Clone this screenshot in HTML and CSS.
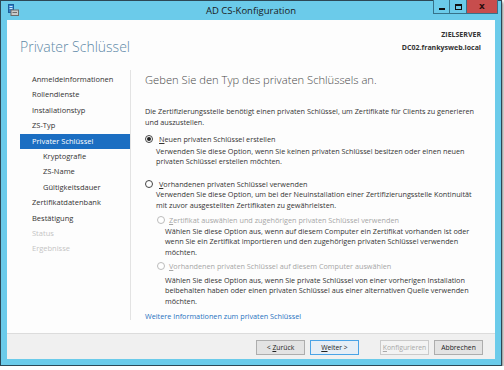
FILE: index.html
```html
<!DOCTYPE html>
<html lang="de">
<head>
    <meta charset="UTF-8">
    <title>AD CS-Konfiguration</title>
    <link rel="stylesheet" href="styles.css">
</head>
<body>
    <div class="window">
        <div class="titlebar">
            <svg class="app-icon" width="11" height="12" viewBox="0 0 11 12">
                <rect x="0.5" y="0.5" width="5" height="8" fill="#2f7fc8" stroke="#1d5f9c"/>
                <rect x="1.5" y="2" width="3" height="1" fill="#cfe6fa"/>
                <rect x="1.5" y="4" width="3" height="1" fill="#cfe6fa"/>
                <rect x="3" y="6" width="7.5" height="5.5" fill="#c9c9c9" stroke="#6b6b6b"/>
                <rect x="4.5" y="8" width="4.5" height="1" fill="#6b6b6b"/>
            </svg>
            <div class="title">AD CS-Konfiguration</div>
            <div class="caption-buttons">
                <span class="cap cap-min"><i></i></span>
                <span class="cap cap-max"><i></i></span>
                <span class="cap cap-close">x</span>
            </div>
        </div>

        <div class="client">
            <div class="header">
                <h1>Privater Schlüssel</h1>
                <div class="target">
                    <div>ZIELSERVER</div>
                    <div>DC02.frankysweb.local</div>
                </div>
            </div>

            <div class="wizard">
                <ul class="steps">
                    <li>Anmeldeinformationen</li>
                    <li>Rollendienste</li>
                    <li>Installationstyp</li>
                    <li>ZS-Typ</li>
                    <li class="active">Privater Schlüssel</li>
                    <li class="sub">Kryptografie</li>
                    <li class="sub">ZS-Name</li>
                    <li class="sub">Gültigkeitsdauer</li>
                    <li>Zertifikatdatenbank</li>
                    <li>Bestätigung</li>
                    <li class="off">Status</li>
                    <li class="off">Ergebnisse</li>
                </ul>

                <div class="page">
                    <h2>Geben Sie den Typ des privaten Schlüssels an.</h2>
                    <p class="intro">Die Zertifizierungsstelle benötigt einen privaten Schlüssel, um Zertifikate für Clients zu generieren<br>und auszustellen.</p>

                    <div class="option option-new">
                        <span class="radio checked"></span>
                        <span><u>N</u>euen privaten Schlüssel erstellen</span>
                    </div>
                    <p class="desc desc-new">Verwenden Sie diese Option, wenn Sie keinen privaten Schlüssel besitzen oder einen neuen<br>privaten Schlüssel erstellen möchten.</p>

                    <div class="option option-existing">
                        <span class="radio"></span>
                        <span><u>V</u>orhandenen privaten Schlüssel verwenden</span>
                    </div>
                    <p class="desc desc-existing">Verwenden Sie diese Option, um bei der Neuinstallation einer Zertifizierungsstelle Kontinuität<br>mit zuvor ausgestellten Zertifikaten zu gewährleisten.</p>

                    <div class="option sub-option sub-cert">
                        <span class="radio disabled"></span>
                        <span><u>Z</u>ertifikat auswählen und zugehörigen privaten Schlüssel verwenden</span>
                    </div>
                    <p class="desc sub-desc desc-cert">Wählen Sie diese Option aus, wenn auf diesem Computer ein Zertifikat vorhanden ist oder<br>wenn Sie ein Zertifikat importieren und den zugehörigen privaten Schlüssel verwenden<br>möchten.</p>

                    <div class="option sub-option sub-key">
                        <span class="radio disabled"></span>
                        <span><u>V</u>orhandenen privaten Schlüssel auf diesem Computer auswählen</span>
                    </div>
                    <p class="desc sub-desc desc-key">Wählen Sie diese Option aus, wenn Sie private Schlüssel von einer vorherigen Installation<br>beibehalten haben oder einen privaten Schlüssel aus einer alternativen Quelle verwenden<br>möchten.</p>

                    <a class="more-link" href="#">Weitere Informationen zum privaten Schlüssel</a>
                </div>
            </div>

            <div class="footer">
                <button class="btn">&lt; <u>Z</u>urück</button>
                <button class="btn btn-default"><u>W</u>eiter &gt;</button>
                <button class="btn btn-disabled" disabled><u>K</u>onfigurieren</button>
                <button class="btn">Abbrechen</button>
            </div>
        </div>
    </div>
</body>
</html>
```

FILE: styles.css
```css
* {
    margin: 0;
    padding: 0;
    box-sizing: border-box;
}

body {
    background: #ffffff;
    font-family: "Open Sans", "Noto Sans", sans-serif;
    color: #333;
}

.window {
    width: 502px;
    height: 366px;
    border: 1px solid #2d4856;
    background: #6bcbea;
    padding: 0 6px 6px;
    display: flex;
    flex-direction: column;
    box-shadow: 1px 2px 3px rgba(0, 0, 0, 0.55);
}

/* title bar */
.titlebar {
    height: 19px;
    display: grid;
    grid-template-columns: 1fr auto 1fr;
    align-items: start;
}

.app-icon {
    margin: 3px 0 0 1px;
}

.title {
    font-size: 9.5px;
    line-height: 19px;
    color: #1a1a1a;
}

.caption-buttons {
    justify-self: end;
    display: flex;
    margin: -1px -3px 0 0;
}

.cap {
    height: 14px;
    border: 1px solid #36728a;
    border-top: none;
    display: flex;
    align-items: center;
    justify-content: center;
}

.cap-min,
.cap-max {
    width: 17px;
    background: #6bcbea;
}

.cap-max {
    border-left: none;
}

.cap-min i {
    width: 6px;
    height: 2px;
    margin-top: 4px;
    background: #111;
}

.cap-max i {
    width: 7px;
    height: 6px;
    border: 1px solid #111;
    border-top-width: 2px;
}

.cap-close {
    width: 31px;
    border-left: none;
    background: #c74d4d;
    color: #2a0d0d;
    font-family: "DejaVu Sans", sans-serif;
    font-weight: bold;
    font-size: 9px;
    line-height: 1;
}

/* client area */
.client {
    flex: 1;
    background: #fdfdfd;
    display: flex;
    flex-direction: column;
}

.header {
    height: 50px;
    display: flex;
    justify-content: space-between;
    padding: 0 14px 0 13px;
}

.header h1 {
    align-self: center;
    margin-top: 2px;
    font-size: 14px;
    font-weight: 300;
    color: #5d89a7;
}

.target {
    padding-top: 8px;
    text-align: right;
    font-size: 7px;
    font-weight: bold;
    line-height: 13px;
    color: #333;
}

.wizard {
    flex: 1;
    display: flex;
}

.steps {
    width: 124px;
    list-style: none;
    padding-top: 2px;
    margin-bottom: 13px;
    border-right: 1px solid #e3e3e3;
    font-size: 7.5px;
}

.steps li {
    height: 15.4px;
    line-height: 15.4px;
    margin-left: 13px;
    padding-left: 12px;
    color: #333;
}

.steps li.active {
    background: #1b6ec2;
    color: #fff;
}

.steps li.sub {
    padding-left: 23px;
}

.steps li.off {
    color: #c4c4c4;
}

.page {
    flex: 1;
    padding: 2px 12px 0 14px;
    font-size: 7.25px;
    line-height: 10.5px;
    color: #333;
    white-space: nowrap;
}

.page h2 {
    font-size: 11.2px;
    font-weight: 300;
    line-height: 16px;
    color: #4a4a4a;
}

.intro {
    margin-top: 18px;
}

.option {
    display: flex;
    align-items: center;
    gap: 6px;
    height: 10.5px;
}

.radio {
    width: 8px;
    height: 8px;
    border: 1px solid #444;
    border-radius: 50%;
    background: #fff;
    display: flex;
    align-items: center;
    justify-content: center;
}

.radio.checked::after {
    content: "";
    width: 4px;
    height: 4px;
    border-radius: 50%;
    background: #222;
}

.radio.disabled {
    border-color: #bcbcbc;
}

.desc {
    margin-left: 11px;
}

.option-new {
    margin-top: 7px;
}

.desc-new {
    margin-top: 1px;
}

.option-existing {
    margin-top: 12px;
}

.sub-option {
    margin-left: 12px;
    gap: 4px;
    color: #a6a6a6;
}

.sub-desc {
    margin-left: 20px;
}

.sub-cert {
    margin-top: 5px;
}

.sub-key {
    margin-top: 4px;
}

.desc-key {
    margin-top: 3px;
}

.more-link {
    display: block;
    margin-top: 5px;
    color: #1f72c0;
    text-decoration: none;
}

/* footer buttons */
.footer {
    height: 26px;
    background: #f0f0f0;
    border-top: 1px solid #dcdcdc;
    display: flex;
    justify-content: flex-end;
    align-items: center;
    padding: 2px 12px 0 0;
    gap: 5px;
}

.btn {
    width: 49px;
    height: 15px;
    background: #e3e3e3;
    border: 1px solid #adadad;
    font-family: "Open Sans", "Noto Sans", sans-serif;
    font-size: 6.8px;
    color: #222;
}

.btn-default {
    border-color: #4aa3e6;
    background: #e6eef6;
    margin-right: 16px;
}

.btn-disabled {
    color: #a8a8a8;
    border-color: #cacaca;
    background: #f3f3f3;
}
```
